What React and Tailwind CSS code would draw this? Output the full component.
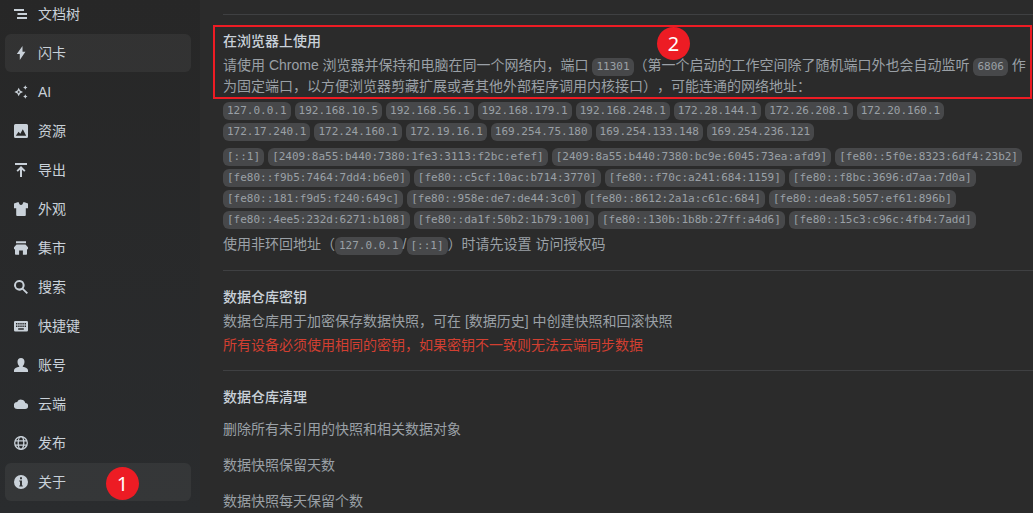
import React from 'react';

// Icons are drawn on a 14 x 14 grid
const icons = {
  outline: <path d="M0 2h10v2H0zM3.500 6H13v2H3.500zM3 10h10v2H3z" />,
  flashcard: <path d="M8.500 0 2.800 8h3v6l5.600-8.200h-2.900z" />,
  ai: (
    <>
      <path
        fillRule="evenodd"
        d="M4.700 2.700 6.100 5.600 9 7 6.100 8.400 4.700 11.300 3.300 8.400.400 7l2.900-1.400zM4.700 5.500 4.200 6.500 3.200 7l1 .500.500 1 .500-1 1-.500-1-.500z"
      />
      <path d="m11.300.300.700 1.500 1.500.700-1.500.700-.700 1.500-.700-1.500-1.500-.700 1.500-.700zM11.300 9.300l.700 1.500 1.500.700-1.500.700-.700 1.500-.700-1.500-1.500-.700 1.500-.700z" />
    </>
  ),
  image: (
    <path
      fillRule="evenodd"
      d="M1.500 0h11A1.500 1.500 0 0 1 14 1.500v11a1.500 1.500 0 0 1-1.500 1.500h-11A1.500 1.500 0 0 1 0 12.500v-11A1.500 1.500 0 0 1 1.500 0zM1.800 11.800h10.400L8.800 5.300 6.300 9.800 4.600 7.800z"
    />
  ),
  upload: <path d="M1 0h12v2H1zM7 3l4.500 4.500-1.300 1.300L8 6.700V14H6V6.700L3.800 8.800 2.500 7.500z" />,
  shirt: (
    <path d="M3.500.3h1.300C5 1.800 5.800 3 7 3S9 1.800 9.200.3h1.300L14 1.600v4.600h-2.200V13q0 .9-.9.9H3.100q-.9 0-.9-.9V6.200H0V1.600z" />
  ),
  store: (
    <path d="M2 .2h10v2H2zM2.500 3.500h9L14 6.300v2h-1V13q0 .8-.8.8H8.900V9.500H5.100v4.300H1.800q-.8 0-.8-.8V8.300H0v-2z" />
  ),
  search: (
    <path
      fillRule="evenodd"
      d="M5.300 0a5.300 5.300 0 0 1 4.300 8.400l4.400 4.300-1.300 1.300-4.400-4.300A5.300 5.300 0 1 1 5.300 0zm0 2a3.300 3.300 0 1 0 0 6.600 3.300 3.300 0 0 0 0-6.600z"
    />
  ),
  keyboard: (
    <path
      fillRule="evenodd"
      d="M1.300 2h11.400A1.300 1.300 0 0 1 14 3.300v7.900a1.300 1.300 0 0 1-1.300 1.300H1.300A1.300 1.300 0 0 1 0 11.200V3.300A1.300 1.300 0 0 1 1.300 2zM2 4v1.400h1.400V4zm2.200 0v1.400h1.400V4zm2.100 0v1.400h1.400V4zm2.100 0v1.400h1.400V4zm2.200 0v1.400H12V4zM2 6.500v1.400h1.400V6.500zm2.200 0v1.400h1.400V6.500zm2.100 0v1.400h1.400V6.500zm2.100 0v1.400h1.400V6.500zm2.200 0v1.400H12V6.500zM4.200 9.300v1.400h5.600V9.300z"
    />
  ),
  account: (
    <path d="M7 0c2.200 0 3.500 1.500 3.500 3.700 0 1.800-.7 3.300-1.700 4.200v.9c2.700.5 5.200 1.500 5.200 3.500V14H0v-1.700c0-2 2.500-3 5.200-3.500v-.9C4.200 7 3.500 5.500 3.500 3.700 3.500 1.500 4.800 0 7 0z" />
  ),
  cloud: (
    <path d="M11.300 6.100A4.400 4.400 0 0 0 3.100 5 3.500 3.500 0 0 0 3.500 12h7.600a2.950 2.950 0 0 0 .2-5.900z" />
  ),
  globe: (
    <g fill="none" stroke="currentColor" strokeWidth="1.300">
      <circle cx="7" cy="7" r="6.300" />
      <ellipse cx="7" cy="7" rx="2.800" ry="6.300" />
      <path d="M1 4.900h12M1 9.100h12" />
    </g>
  ),
  info: (
    <path
      fillRule="evenodd"
      d="M7 0a7 7 0 1 1 0 14A7 7 0 0 1 7 0zM6 2.300v2h2v-2zM5.200 5.500v1.100H6v3.800h-.8v1.200h3.600v-1.200H8V5.500z"
    />
  ),
};

const tabs = [
  { name: '文档树', icon: 'outline' },
  { name: '闪卡', icon: 'flashcard', hover: true },
  { name: 'AI', icon: 'ai' },
  { name: '资源', icon: 'image' },
  { name: '导出', icon: 'upload' },
  { name: '外观', icon: 'shirt' },
  { name: '集市', icon: 'store' },
  { name: '搜索', icon: 'search' },
  { name: '快捷键', icon: 'keyboard' },
  { name: '账号', icon: 'account' },
  { name: '云端', icon: 'cloud' },
  { name: '发布', icon: 'globe' },
  { name: '关于', icon: 'info', hover: true, step: 1 },
];

const ipv4 = [
  '127.0.0.1', '192.168.10.5', '192.168.56.1', '192.168.179.1', '192.168.248.1',
  '172.28.144.1', '172.26.208.1', '172.20.160.1', '172.17.240.1', '172.24.160.1',
  '172.19.16.1', '169.254.75.180', '169.254.133.148', '169.254.236.121',
];

const ipv6 = [
  '[::1]',
  '[2409:8a55:b440:7380:1fe3:3113:f2bc:efef]',
  '[2409:8a55:b440:7380:bc9e:6045:73ea:afd9]',
  '[fe80::5f0e:8323:6df4:23b2]',
  '[fe80::f9b5:7464:7dd4:b6e0]',
  '[fe80::c5cf:10ac:b714:3770]',
  '[fe80::f70c:a241:684:1159]',
  '[fe80::f8bc:3696:d7aa:7d0a]',
  '[fe80::181:f9d5:f240:649c]',
  '[fe80::958e:de7:de44:3c0]',
  '[fe80::8612:2a1a:c61c:684]',
  '[fe80::dea8:5057:ef61:896b]',
  '[fe80::4ee5:232d:6271:b108]',
  '[fe80::da1f:50b2:1b79:100]',
  '[fe80::130b:1b8b:27ff:a4d6]',
  '[fe80::15c3:c96c:4fb4:7add]',
];

function Code({ children }) {
  return (
    <code className="inline-block rounded-md bg-[#47484a] px-1 font-['DejaVu_Sans_Mono',monospace] text-[11px] leading-[18px] text-[#9aa0a6]">
      {children}
    </code>
  );
}

function AddressList({ items }) {
  return (
    <ul className="flex flex-wrap gap-x-1 gap-y-[3px]">
      {items.map((ip) => (
        <li key={ip} className="flex">
          <Code>{ip}</Code>
        </li>
      ))}
    </ul>
  );
}

function Step({ children, className }) {
  return (
    <span
      className={`absolute flex size-[33px] items-center justify-center rounded-full bg-[#ed1c24] font-['Noto_Sans',sans-serif] text-xl text-white ${className}`}
    >
      {children}
    </span>
  );
}

function Sidebar() {
  return (
    <nav className="w-[200px] shrink-0 overflow-hidden bg-linear-to-b from-[#272727] to-[#2a2c2e] pr-[9px] pl-[5px]">
      <ul className="-mt-[5px] flex flex-col gap-px">
        {tabs.map((tab) => (
          <li key={tab.name} className="relative">
            <button
              type="button"
              className={`flex h-[38px] w-full items-center gap-[10px] rounded-md px-[9px] text-left text-[#c9d1d9] ${tab.hover ? 'bg-white/5' : ''}`}
            >
              <svg viewBox="0 0 14 14" className="size-[14px] shrink-0 fill-current" aria-hidden="true">
                {icons[tab.icon]}
              </svg>
              {tab.name}
            </button>
            {tab.step && <Step className="top-1 left-[101px]">{tab.step}</Step>}
          </li>
        ))}
      </ul>
    </nav>
  );
}

function Title({ children }) {
  return <h2 className="font-medium text-[#c9d1d9]">{children}</h2>;
}

export default function App() {
  return (
    <div className="flex h-screen overflow-hidden bg-[#2b2b2b] font-['Liberation_Sans','Noto_Sans_CJK_SC',sans-serif] text-sm leading-[21px] text-[#9aa0a6] [text-spacing-trim:space-all]">
      <Sidebar />

      <main className="min-w-0 flex-1 pt-[14px] pl-[23px]">
        <section className="border-t border-[#3f4042] pt-4 pb-[15px]">
          <div className="relative">
            <Title>在浏览器上使用</Title>
            <p className="mt-[3px]">
              请使用 Chrome 浏览器并保持和电脑在同一个网络内，端口 <Code>11301</Code>（第一个启动的工作空间除了随机端口外也会自动监听{' '}
              <Code>6806</Code> 作为固定端口，以方便浏览器剪藏扩展或者其他外部程序调用内核接口），可能连通的网络地址：
            </p>
            <div className="pointer-events-none absolute -top-[6px] right-px -bottom-[2px] -left-[10px] border-2 border-[#ed1c24]" />
            <Step className="-top-1 left-[434px]">2</Step>
          </div>

          <div className="mt-[5px] flex flex-col gap-[7px]">
            <AddressList items={ipv4} />
            <AddressList items={ipv6} />
          </div>
          <p className="mt-[5px]">
            使用非环回地址（<Code>127.0.0.1</Code>/<Code>[::1]</Code>）时请先设置 访问授权码
          </p>
        </section>

        <section className="border-t border-[#3f4042] pt-4 pb-[14px]">
          <Title>数据仓库密钥</Title>
          <p className="mt-[3px]">数据仓库用于加密保存数据快照，可在 [数据历史] 中创建快照和回滚快照</p>
          <p className="mt-[3px] text-[#d23f31]">所有设备必须使用相同的密钥，如果密钥不一致则无法云端同步数据</p>
        </section>

        <section className="border-t border-[#3f4042] pt-4">
          <Title>数据仓库清理</Title>
          <div className="mt-[11px] flex flex-col gap-[15px]">
            <p>删除所有未引用的快照和相关数据对象</p>
            <p>数据快照保留天数</p>
            <p>数据快照每天保留个数</p>
          </div>
        </section>
      </main>
    </div>
  );
}
